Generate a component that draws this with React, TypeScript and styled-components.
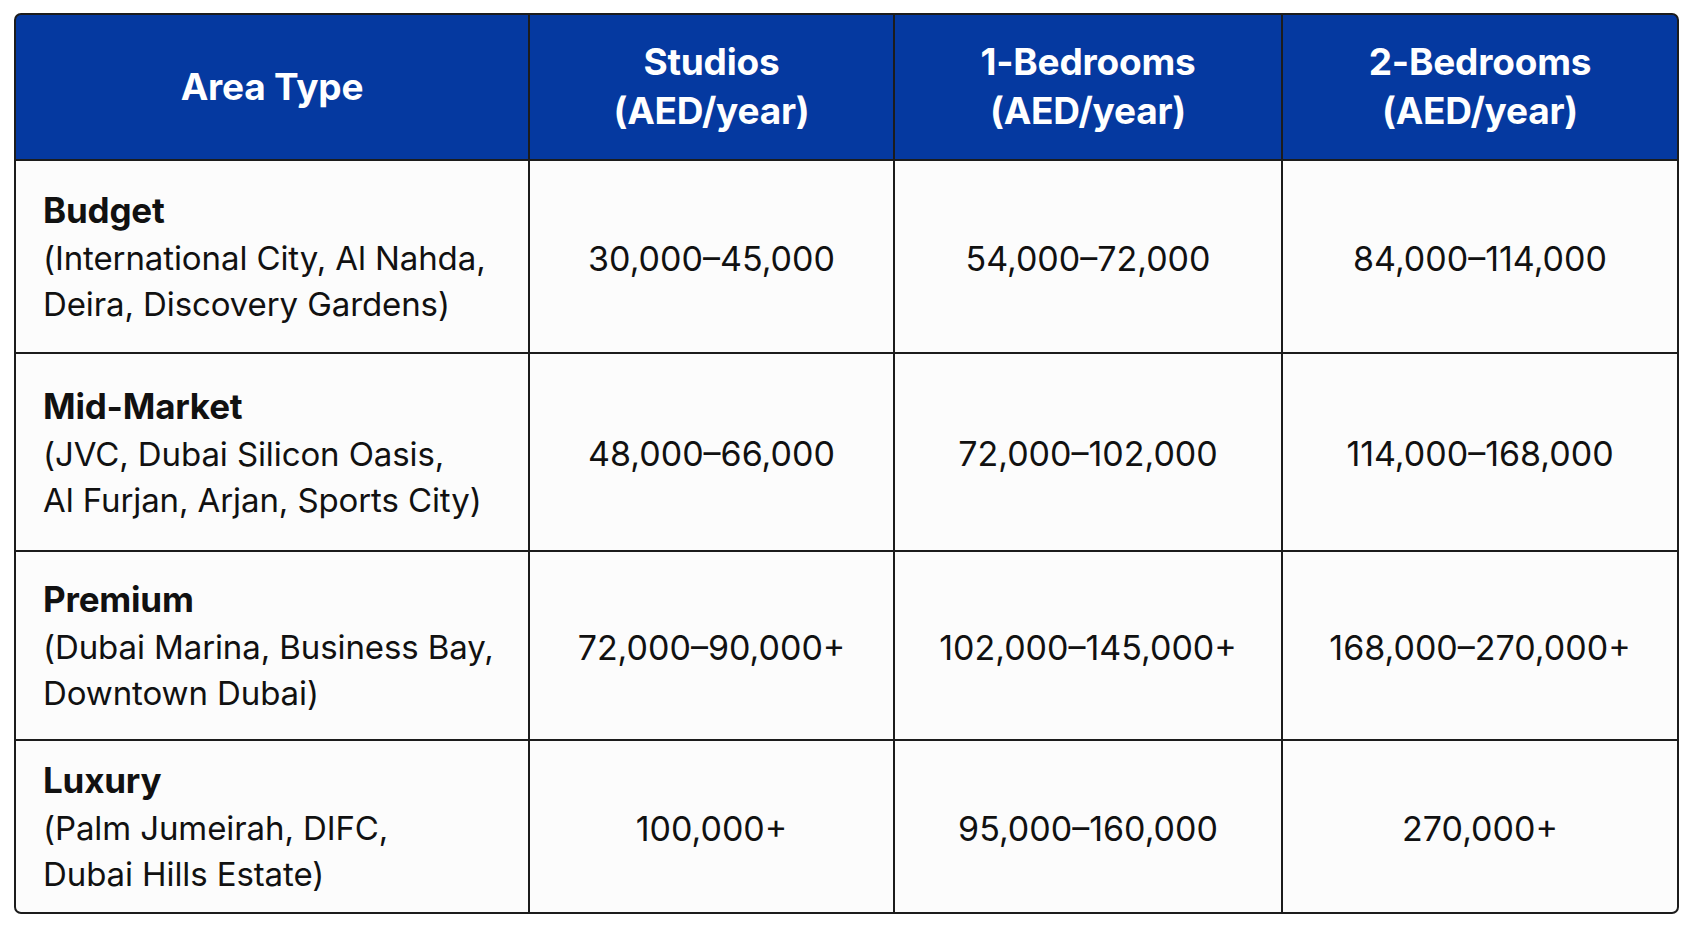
import React from "react";
import styled, { createGlobalStyle } from "styled-components";

const Global = createGlobalStyle`
  html, body { margin: 0; padding: 0; background: #ffffff; }
  body { font-family: "Inter", "Noto Sans", sans-serif; }
`;

const Page = styled.div`
  padding: 13px 14px;
  width: 1665px;
`;

const Table = styled.div`
  display: grid;
  grid-template-columns: 512px 363px 386px 394px;
  grid-template-rows: 144px 191px 196px 187px 171px;
  gap: 2px;
  background: #1c1c1c;
  border: 2px solid #1c1c1c;
  border-radius: 7px;
  overflow: hidden;
`;

const HeadCell = styled.div`
  background: #0539a0;
  color: #ffffff;
  display: flex;
  align-items: center;
  justify-content: center;
  text-align: center;
  font-size: 37px;
  font-weight: 700;
  line-height: 49px;
  letter-spacing: -0.2px;
  padding-bottom: 2px;
`;

const AreaCell = styled.div`
  background: #fcfcfc;
  display: flex;
  flex-direction: column;
  justify-content: center;
  padding: 0 0 0 27px;
  color: #111111;
`;

const AreaTitle = styled.div`
  font-size: 35px;
  font-weight: 700;
  line-height: 49px;
  letter-spacing: -0.2px;
`;

const AreaList = styled.div`
  font-size: 33px;
  font-weight: 400;
  line-height: 46px;
  letter-spacing: -0.1px;
`;

const ValueCell = styled.div`
  background: #fcfcfc;
  display: flex;
  align-items: center;
  justify-content: center;
  font-size: 34px;
  font-weight: 400;
  color: #111111;
  padding-top: 3px;
`;

const rows = [
  {
    title: "Budget",
    lines: ["(International City, Al Nahda,", "Deira, Discovery Gardens)"],
    values: ["30,000–45,000", "54,000–72,000", "84,000–114,000"],
  },
  {
    title: "Mid-Market",
    lines: ["(JVC, Dubai Silicon Oasis,", "Al Furjan, Arjan, Sports City)"],
    values: ["48,000–66,000", "72,000–102,000", "114,000–168,000"],
  },
  {
    title: "Premium",
    lines: ["(Dubai Marina, Business Bay,", "Downtown Dubai)"],
    values: ["72,000–90,000+", "102,000–145,000+", "168,000–270,000+"],
  },
  {
    title: "Luxury",
    lines: ["(Palm Jumeirah, DIFC,", "Dubai Hills Estate)"],
    values: ["100,000+", "95,000–160,000", "270,000+"],
  },
];

export default function App() {
  return (
    <>
      <Global />
      <Page>
        <Table>
          <HeadCell>Area Type</HeadCell>
          <HeadCell>
            Studios
            <br />
            (AED/year)
          </HeadCell>
          <HeadCell>
            1-Bedrooms
            <br />
            (AED/year)
          </HeadCell>
          <HeadCell>
            2-Bedrooms
            <br />
            (AED/year)
          </HeadCell>
          {rows.map((r) => (
            <React.Fragment key={r.title}>
              <AreaCell>
                <AreaTitle>{r.title}</AreaTitle>
                {r.lines.map((l) => (
                  <AreaList key={l}>{l}</AreaList>
                ))}
              </AreaCell>
              {r.values.map((v, i) => (
                <ValueCell key={i}>{v}</ValueCell>
              ))}
            </React.Fragment>
          ))}
        </Table>
      </Page>
    </>
  );
}
